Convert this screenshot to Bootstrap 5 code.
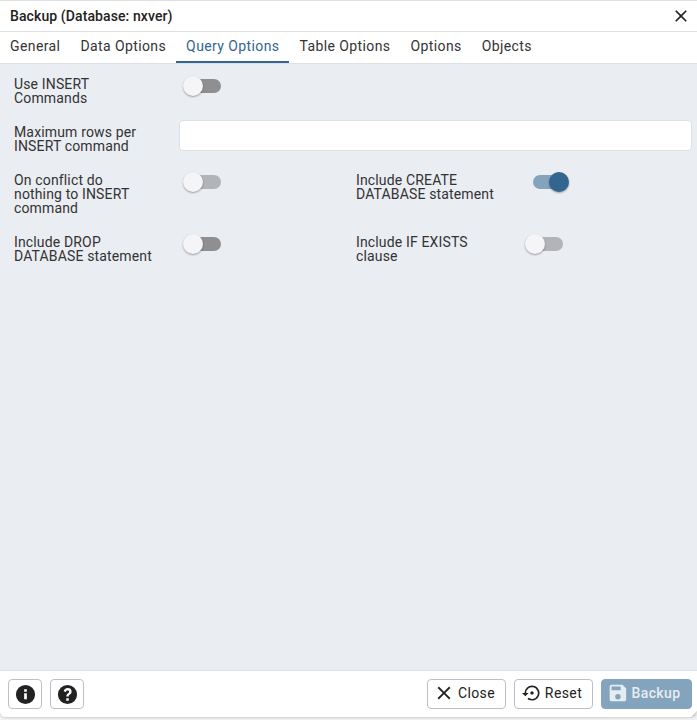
<!DOCTYPE html>
<html lang="en">
<head>
    <meta charset="UTF-8">
    <meta name="viewport" content="width=device-width, initial-scale=1.0">
    <title>Backup</title>
    <link href="https://cdn.jsdelivr.net/npm/bootstrap@5.3.0/dist/css/bootstrap.min.css" rel="stylesheet">
    <style>
        html, body {
            height: 100%;
        }
        body {
            background: #f2f2f2;
            font-family: Roboto, "Liberation Sans", sans-serif;
            font-size: 14px;
            color: #222;
        }
        .dlg {
            height: 717px;
            background: #fff;
            border-top: 1px solid #dde0e6;
            border-radius: 0 0 6px 6px;
            box-shadow: 0 1px 2px rgba(0,0,0,.15);
            overflow: hidden;
            position: relative;
        }
        .dlg-title {
            height: 31px;
            padding: 0 6px 0 10px;
            border-bottom: 1px solid #dde0e6;
            font-weight: 500;
            font-size: 14px;
            letter-spacing: 0.1px;
        }
        .dlg-tabs {
            height: 32px;
            border-bottom: 1px solid #dde0e6;
        }
        .dlg-tab {
            height: 31px;
            padding: 0 10px;
            letter-spacing: 0.4px;
            color: #333;
            border-bottom: 2px solid transparent;
        }
        .dlg-tab.on {
            color: #326690;
            border-bottom-color: #326690;
        }
        .dlg-body {
            background: #eaedf2;
            padding: 13px 5px 0 8px;
        }
        .lbl {
            width: 171px;
            padding-left: 6px;
            padding-right: 27px;
            line-height: 14px;
            letter-spacing: 0.15px;
            color: #333;
            flex-shrink: 0;
        }
        .lbl-mid {
            padding-top: 5px;
        }
        .rw-a {
            margin-top: 15px;
        }
        .rw-b {
            margin-top: 20px;
        }
        .rw-c {
            margin-top: 20px;
        }
        .fld {
            height: 31px;
            background: #fff;
            border: 1px solid #dde0e6;
            border-radius: 4px;
        }
        .tgl {
            position: relative;
            display: block;
            width: 30px;
            height: 14px;
            margin: 2px 0 0 12px;
            border-radius: 7px;
            background: #8f8f92;
        }
        .tgl.dim {
            background: #b3b4b7;
        }
        .tgl.on {
            background: #84a4be;
        }
        .tgl i {
            position: absolute;
            left: -8px;
            top: -3px;
            width: 20px;
            height: 20px;
            border-radius: 50%;
            background: #f5f5f7;
            box-shadow: 0 1px 2px rgba(0,0,0,.35);
        }
        .tgl.on i {
            left: 16px;
            background: #326690;
        }
        .dlg-foot {
            height: 47px;
            padding: 0 5px 0 8px;
            border-top: 1px solid #dde0e6;
            background: #fff;
        }
        .fbtn {
            height: 30px;
            padding: 0;
            font-size: 14px;
            letter-spacing: 0.4px;
            color: #222;
            background: #fff;
            border: 1px solid #bac1cd;
            border-radius: 4px;
            gap: 3px;
        }
        .fbtn-ico {
            width: 34px;
        }
        .fbtn-close {
            width: 79px;
            padding: 0 5px 2px 0;
        }
        .fbtn-reset {
            width: 79px;
            padding: 0 3px 2px 0;
        }
        .fbtn-save {
            width: 91px;
            padding: 0 6px 2px 0;
            font-weight: 500;
        }
        .fbtn-save:disabled {
            background: #84a4be;
            border-color: #84a4be;
            color: #e6edf2;
            opacity: 1;
        }
        .grip {
            position: absolute;
            right: 0;
            bottom: 0;
            width: 0;
            height: 0;
            border-left: 6px solid transparent;
            border-bottom: 6px solid #ccc;
        }
    </style>
</head>
<body>
    <div class="dlg d-flex flex-column">
        <div class="dlg-title d-flex align-items-center justify-content-between">
            <span>Backup (Database: nxver)</span>
            <svg width="20" height="20" viewBox="0 0 24 24" fill="#222"><path d="M19 6.41 17.59 5 12 10.59 6.41 5 5 6.41 10.59 12 5 17.59 6.41 19 12 13.41 17.59 19 19 17.59 13.41 12z"/></svg>
        </div>
        <div class="dlg-tabs d-flex">
            <div class="dlg-tab d-flex align-items-center">General</div>
            <div class="dlg-tab d-flex align-items-center">Data Options</div>
            <div class="dlg-tab on d-flex align-items-center">Query Options</div>
            <div class="dlg-tab d-flex align-items-center">Table Options</div>
            <div class="dlg-tab d-flex align-items-center">Options</div>
            <div class="dlg-tab d-flex align-items-center">Objects</div>
        </div>
        <div class="dlg-body flex-grow-1">
            <div class="d-flex">
                <div class="lbl">Use INSERT Commands</div>
                <span class="tgl"><i></i></span>
            </div>
            <div class="d-flex rw-a">
                <div class="lbl lbl-mid">Maximum rows per INSERT command</div>
                <input class="fld flex-grow-1" type="text">
            </div>
            <div class="row g-0 rw-b">
                <div class="col-6 d-flex">
                    <div class="lbl">On conflict do nothing to INSERT command</div>
                    <span class="tgl dim"><i></i></span>
                </div>
                <div class="col-6 d-flex">
                    <div class="lbl">Include CREATE DATABASE statement</div>
                    <span class="tgl on"><i></i></span>
                </div>
            </div>
            <div class="row g-0 rw-c">
                <div class="col-6 d-flex">
                    <div class="lbl">Include DROP DATABASE statement</div>
                    <span class="tgl"><i></i></span>
                </div>
                <div class="col-6 d-flex">
                    <div class="lbl">Include IF EXISTS clause</div>
                    <span class="tgl dim"><i></i></span>
                </div>
            </div>
        </div>
        <div class="dlg-foot d-flex align-items-center justify-content-between">
            <div class="d-flex gap-2">
                <button class="fbtn fbtn-ico d-flex align-items-center justify-content-center" type="button">
                    <svg width="23" height="23" viewBox="0 0 24 24" fill="#222"><path d="M12 2a10 10 0 1 0 0 20 10 10 0 0 0 0-20zm1.400 15h-2.800v-6.400h2.800zm0-8h-2.800V6.500h2.800z"/></svg>
                </button>
                <button class="fbtn fbtn-ico d-flex align-items-center justify-content-center" type="button">
                    <svg width="23" height="23" viewBox="0 0 24 24" fill="#222"><path d="M12 2a10 10 0 1 0 0 20 10 10 0 0 0 0-20zm1.300 16.500h-2.600V16h2.600zm2.400-7.600c-.5.7-1 1-1.500 1.400-.7.5-.9.8-.9 1.900h-2.500c0-1.800.5-2.500 1.500-3.200.8-.6 1.400-1 1.400-1.800 0-.8-.6-1.300-1.600-1.300-1 0-1.700.6-1.800 1.600L8 8.700C8.300 6.500 10 5.200 12.200 5.200c2.400 0 4.100 1.300 4.100 3.400 0 .9-.2 1.600-.6 2.300z"/></svg>
                </button>
            </div>
            <div class="d-flex gap-2">
                <button class="fbtn fbtn-close d-flex align-items-center justify-content-center" type="button">
                    <svg width="22" height="22" viewBox="0 0 24 24" fill="#222"><path d="M19 6.41 17.59 5 12 10.59 6.41 5 5 6.41 10.59 12 5 17.59 6.41 19 12 13.41 17.59 19 19 17.59 13.41 12z"/></svg>
                    Close
                </button>
                <button class="fbtn fbtn-reset d-flex align-items-center justify-content-center" type="button">
                    <svg width="20" height="20" viewBox="0 0 24 24" fill="#222"><path d="M14 12c0-1.100-.9-2-2-2s-2 .9-2 2 .9 2 2 2 2-.9 2-2zm-2-9a9 9 0 0 0-9 9H0l4 4 4-4H5a7 7 0 1 1 2.900 5.700l-1.400 1.400A9 9 0 1 0 12 3z"/></svg>
                    Reset
                </button>
                <button class="fbtn fbtn-save d-flex align-items-center justify-content-center" type="button" disabled>
                    <svg width="22" height="22" viewBox="-1 0 24 24" fill="#e6edf2"><path d="M17 3H5a2 2 0 0 0-2 2v14a2 2 0 0 0 2 2h14a2 2 0 0 0 2-2V7l-4-4zm-5 16a3 3 0 1 1 0-6 3 3 0 0 1 0 6zm3-10H5V5h10v4z"/></svg>
                    Backup
                </button>
            </div>
        </div>
        <span class="grip"></span>
    </div>
</body>
</html>
